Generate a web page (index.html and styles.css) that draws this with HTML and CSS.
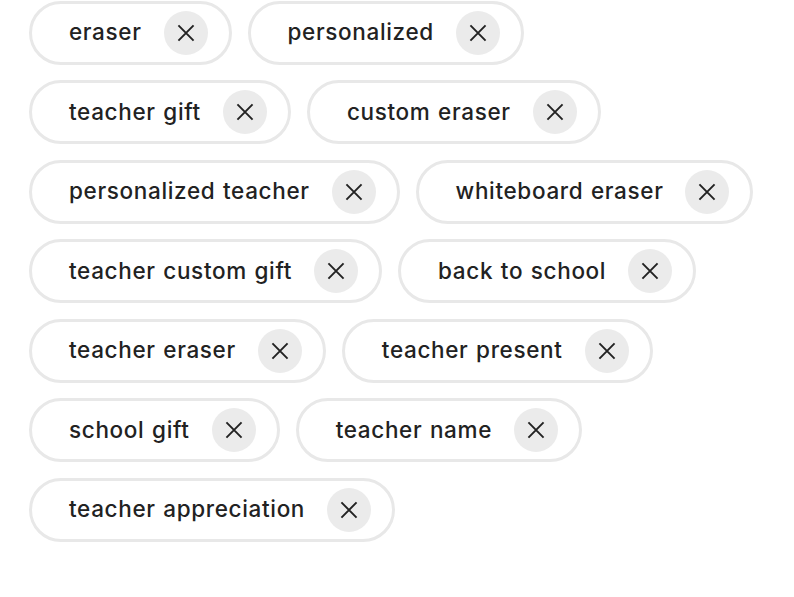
FILE: index.html
```html
<!DOCTYPE html>
<html>
<head>
<meta charset="utf-8">
<link rel="stylesheet" href="styles.css">
</head>
<body>
<div class="tags">
  <div class="chip"><span class="label">eraser</span><button class="close"><svg viewBox="0 0 16 16"><path d="M2.5 2.5 L13.5 13.5 M13.5 2.5 L2.5 13.5"/></svg></button></div>
  <div class="chip"><span class="label">personalized</span><button class="close"><svg viewBox="0 0 16 16"><path d="M2.5 2.5 L13.5 13.5 M13.5 2.5 L2.5 13.5"/></svg></button></div>
  <div class="chip"><span class="label">teacher gift</span><button class="close"><svg viewBox="0 0 16 16"><path d="M2.5 2.5 L13.5 13.5 M13.5 2.5 L2.5 13.5"/></svg></button></div>
  <div class="chip"><span class="label">custom eraser</span><button class="close"><svg viewBox="0 0 16 16"><path d="M2.5 2.5 L13.5 13.5 M13.5 2.5 L2.5 13.5"/></svg></button></div>
  <div class="chip"><span class="label">personalized teacher</span><button class="close"><svg viewBox="0 0 16 16"><path d="M2.5 2.5 L13.5 13.5 M13.5 2.5 L2.5 13.5"/></svg></button></div>
  <div class="chip"><span class="label">whiteboard eraser</span><button class="close"><svg viewBox="0 0 16 16"><path d="M2.5 2.5 L13.5 13.5 M13.5 2.5 L2.5 13.5"/></svg></button></div>
  <div class="chip"><span class="label">teacher custom gift</span><button class="close"><svg viewBox="0 0 16 16"><path d="M2.5 2.5 L13.5 13.5 M13.5 2.5 L2.5 13.5"/></svg></button></div>
  <div class="chip"><span class="label">back to school</span><button class="close"><svg viewBox="0 0 16 16"><path d="M2.5 2.5 L13.5 13.5 M13.5 2.5 L2.5 13.5"/></svg></button></div>
  <div class="chip"><span class="label">teacher eraser</span><button class="close"><svg viewBox="0 0 16 16"><path d="M2.5 2.5 L13.5 13.5 M13.5 2.5 L2.5 13.5"/></svg></button></div>
  <div class="chip"><span class="label">teacher present</span><button class="close"><svg viewBox="0 0 16 16"><path d="M2.5 2.5 L13.5 13.5 M13.5 2.5 L2.5 13.5"/></svg></button></div>
  <div class="chip"><span class="label">school gift</span><button class="close"><svg viewBox="0 0 16 16"><path d="M2.5 2.5 L13.5 13.5 M13.5 2.5 L2.5 13.5"/></svg></button></div>
  <div class="chip"><span class="label">teacher name</span><button class="close"><svg viewBox="0 0 16 16"><path d="M2.5 2.5 L13.5 13.5 M13.5 2.5 L2.5 13.5"/></svg></button></div>
  <div class="chip"><span class="label">teacher appreciation</span><button class="close"><svg viewBox="0 0 16 16"><path d="M2.5 2.5 L13.5 13.5 M13.5 2.5 L2.5 13.5"/></svg></button></div>
</div>
</body>
</html>
```
FILE: styles.css
```css
html, body {
  margin: 0;
  padding: 0;
  background: #fff;
}
body {
  font-family: "Inter", "Liberation Sans", sans-serif;
  color: #222;
}
.tags {
  display: flex;
  flex-wrap: wrap;
  align-items: flex-start;
  gap: 15.5px 16px;
  padding: 0.5px 0 0 29px;
  width: 735px;
}
.chip {
  box-sizing: border-box;
  height: 64px;
  display: flex;
  align-items: center;
  border: 3px solid #e8e8e8;
  border-radius: 32px;
  padding: 0 21px 0 37px;
  background: #fff;
}
.label {
  font-size: 22.5px;
  font-weight: 500;
  letter-spacing: 0.65px;
  word-spacing: 1px;
  white-space: nowrap;
  margin-right: 22px;
  position: relative;
  top: -1px;
}
.close {
  width: 44px;
  height: 44px;
  border: 0;
  border-radius: 50%;
  background: #ebebeb;
  padding: 0;
  display: flex;
  align-items: center;
  justify-content: center;
}
.close svg {
  width: 22px;
  height: 22px;
  fill: none;
  stroke: #222;
  stroke-width: 1.4;
}
```
